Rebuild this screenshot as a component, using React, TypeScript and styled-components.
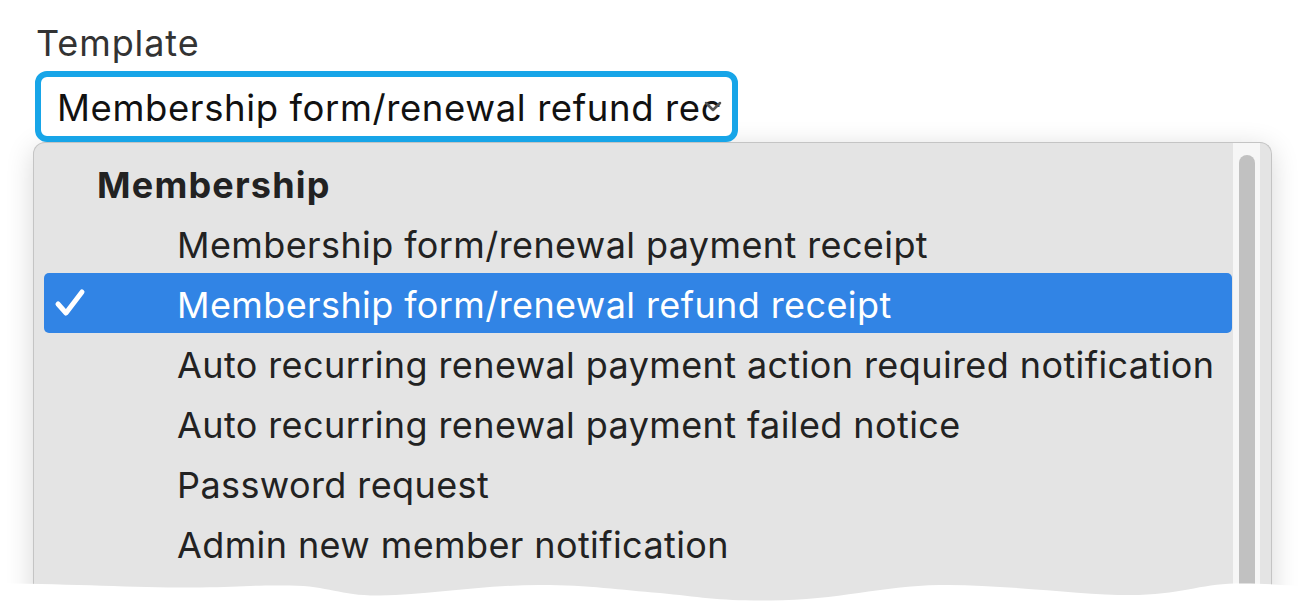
import React from "react";
import styled, { createGlobalStyle } from "styled-components";

const GlobalStyle = createGlobalStyle`
  html, body {
    margin: 0;
    padding: 0;
    background: #ffffff;
    overflow: hidden;
  }
  body {
    font-family: Inter, "Liberation Sans", Arial, sans-serif;
    -webkit-font-smoothing: antialiased;
  }
`;

const Page = styled.div`
  position: relative;
  width: 1300px;
  height: 601px;
  overflow: hidden;
  padding: 21px 0 0 35px;
  box-sizing: border-box;
`;

const Label = styled.div`
  font-size: 36px;
  line-height: 44px;
  letter-spacing: 0.9px;
  color: #333333;
  margin-left: 1px;
  margin-bottom: 6px;
`;

const SelectBox = styled.div`
  position: relative;
  box-sizing: border-box;
  width: 703px;
  height: 71px;
  border: 6px solid #17a5e8;
  border-radius: 12px;
  background: #ffffff;
  padding: 2px 10px 0 16px;
  display: flex;
  align-items: center;
`;

const SelectText = styled.span`
  font-size: 36.5px;
  letter-spacing: 0.6px;
  color: #111111;
  white-space: nowrap;
  overflow: hidden;
`;

const Chevron = styled.svg`
  position: absolute;
  right: 10px;
  top: 24px;
`;

const Panel = styled.div`
  box-sizing: border-box;
  margin-left: -2px;
  width: 1239px;
  height: 470px;
  background: #e4e4e4;
  border: 1px solid #c4c4c4;
  border-bottom: none;
  border-radius: 12px 12px 0 0;
  box-shadow: 0 6px 28px rgba(0, 0, 0, 0.16);
  display: flex;
  padding-right: 11px;
`;

const List = styled.div`
  flex: 1;
  padding: 10px 1px 0 10px;
`;

const Row = styled.div<{ $selected?: boolean; $header?: boolean }>`
  position: relative;
  box-sizing: border-box;
  height: 60px;
  display: flex;
  align-items: center;
  padding: 3px 0 0 ${(p) => (p.$header ? "53px" : "133px")};
  border-radius: 5px;
  font-size: 36px;
  letter-spacing: ${(p) => (p.$header ? "1.2px" : "0.4px")};
  font-weight: ${(p) => (p.$header ? 700 : 400)};
  color: ${(p) => (p.$selected ? "#ffffff" : "#222222")};
  background: ${(p) => (p.$selected ? "#3184e5" : "transparent")};
  white-space: nowrap;
`;

const Check = styled.svg`
  position: absolute;
  left: 10px;
  top: 15px;
`;

const Track = styled.div`
  width: 27px;
  background: #f6f6f6;
  padding: 12px 0 0 6px;
  box-sizing: border-box;
`;

const Thumb = styled.div`
  width: 16px;
  height: 600px;
  border-radius: 8px;
  background: #c1c1c1;
`;

const Tear = styled.svg`
  position: absolute;
  left: 0;
  top: 575px;
`;

const items = [
  "Membership form/renewal payment receipt",
  "Membership form/renewal refund receipt",
  "Auto recurring renewal payment action required notification",
  "Auto recurring renewal payment failed notice",
  "Password request",
  "Admin new member notification",
];

const selectedItem = "Membership form/renewal refund receipt";

export default function App() {
  return (
    <>
      <GlobalStyle />
      <Page>
        <Label>Template</Label>
        <SelectBox>
          <SelectText>{selectedItem}</SelectText>
          <Chevron width="18" height="12" viewBox="0 0 18 12">
            <path
              d="M2 2 L9 9 L16 2"
              fill="none"
              stroke="#555555"
              strokeWidth="2.5"
              strokeLinecap="round"
              strokeLinejoin="round"
            />
          </Chevron>
        </SelectBox>
        <Panel>
          <List>
            <Row $header>Membership</Row>
            {items.map((item) => {
              const selected = item === selectedItem;
              return (
                <Row key={item} $selected={selected}>
                  {selected && (
                    <Check width="32" height="30" viewBox="0 0 32 30">
                      <path
                        d="M4 16 L12 25 L28 4"
                        fill="none"
                        stroke="#ffffff"
                        strokeWidth="5"
                        strokeLinecap="round"
                        strokeLinejoin="round"
                      />
                    </Check>
                  )}
                  {item}
                </Row>
              );
            })}
          </List>
          <Track>
            <Thumb />
          </Track>
        </Panel>
        <Tear width="1300" height="26" viewBox="0 575 1300 26">
          <path
            d="M0 583.5 C 80 584, 140 588, 200 587.5 C 240 587, 250 585, 290 585.5 C 330 586, 340 596, 380 595.5 C 430 595, 480 585, 540 585 C 590 585, 620 590, 660 593 C 700 597, 720 601, 770 600.5 C 840 600, 880 586, 940 585 C 1000 584, 1080 595, 1130 595 C 1180 595, 1200 584, 1235 583.5 C 1260 583, 1280 585, 1300 586 L1300 601 L0 601 Z"
            fill="#ffffff"
          />
        </Tear>
      </Page>
    </>
  );
}
